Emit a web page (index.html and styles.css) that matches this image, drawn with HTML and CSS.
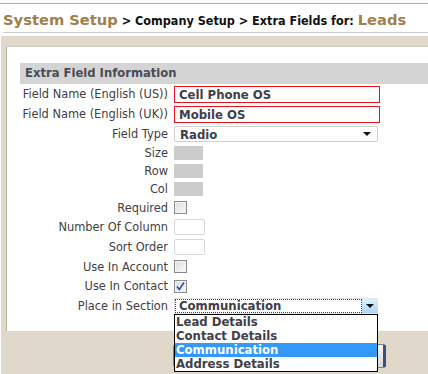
FILE: index.html
```html
<!DOCTYPE html>
<html lang="en">
<head>
  <meta charset="UTF-8">
  <title>Extra Fields for: Leads</title>
  <link rel="stylesheet" href="styles.css">
</head>
<body>
  <div class="top-rule"></div>
  <h1 class="crumbs">
    <span class="crumb-main">System Setup</span>
    <span class="crumb-sep">&gt; Company Setup &gt; Extra Fields for:</span>
    <span class="crumb-main">Leads</span>
  </h1>

  <div class="panel">
    <div class="sheet">
      <div class="section-head">Extra Field Information</div>

      <div class="form-grid">
        <label class="row-20">Field Name (English (US))</label>
        <div class="row-20"><div class="text-input invalid">Cell Phone OS</div></div>

        <label class="row-20">Field Name (English (UK))</label>
        <div class="row-20"><div class="text-input invalid">Mobile OS</div></div>

        <label class="row-20">Field Type</label>
        <div class="row-20">
          <div class="select-box">
            <span>Radio</span>
            <span class="caret"></span>
          </div>
        </div>

        <label class="row-18">Size</label>
        <div class="row-18"><div class="disabled-box"></div></div>

        <label class="row-18">Row</label>
        <div class="row-18"><div class="disabled-box"></div></div>

        <label class="row-18">Col</label>
        <div class="row-18"><div class="disabled-box"></div></div>

        <label class="row-19">Required</label>
        <div class="row-19"><span class="checkbox"></span></div>

        <label class="row-20">Number Of Column</label>
        <div class="row-20"><div class="small-input"></div></div>

        <label class="row-20">Sort Order</label>
        <div class="row-20"><div class="small-input"></div></div>

        <label class="row-19">Use In Account</label>
        <div class="row-19"><span class="checkbox"></span></div>

        <label class="row-20">Use In Contact</label>
        <div class="row-20">
          <span class="checkbox checked">
            <svg width="11" height="11" viewBox="0 0 11 11"><path d="M2 5.5 L4.3 8.5 L9 1.5" fill="none" stroke="#2a4fa8" stroke-width="1.6"/></svg>
          </span>
        </div>

        <label class="row-20">Place in Section</label>
        <div class="row-20">
          <div class="dropdown">
            <div class="select-open">
              <span class="focus-text">Communication</span>
              <span class="drop-btn"><span class="caret"></span></span>
            </div>
            <ul class="option-list">
              <li>Lead Details</li>
              <li>Contact Details</li>
              <li class="selected">Communication</li>
              <li>Address Details</li>
            </ul>
          </div>
        </div>
      </div>
    </div>

    <div class="actions">
      <button class="btn">Save</button>
      <button class="btn btn-focus">Cancel</button>
    </div>
  </div>
</body>
</html>
```

FILE: styles.css
```css
/* ===== Base ===== */
* {
  margin: 0;
  padding: 0;
  box-sizing: border-box;
}

body {
  background: #ffffff;
  font-family: "DejaVu Sans", Verdana, sans-serif;
  font-size: 11.4px;
  color: #3f4049;
}

.top-rule {
  margin-top: 3px;
  height: 1px;
  background: #aab2bf;
}

/* ===== Breadcrumb title ===== */
.crumbs {
  margin: 0 0 0 3px;
  height: 29px;
  padding-top: 7px;
  border-bottom: 1px solid #cccccc;
  font-family: "DejaVu Sans Condensed", "DejaVu Sans", sans-serif;
  font-weight: bold;
  font-size: 12.5px;
  color: #111111;
  white-space: nowrap;
}

.crumb-main {
  font-family: "DejaVu Sans", Verdana, sans-serif;
  font-size: 14.7px;
  color: #a0804f;
}

/* ===== Beige panel ===== */
.panel {
  margin: 3px 0 0 1px;
  padding: 10px 0 0 5px;
  background: #e0d8cb;
  height: 340px;
}

.sheet {
  background: #ffffff;
  border-left: 1px solid #b5aea3;
  border-top: 1px solid #cfc8bd;
  padding: 16px 0 15px 13px;
}

.section-head {
  background: #d4d4d4;
  height: 21px;
  padding: 3px 0 0 5px;
  font-weight: bold;
  font-size: 11.6px;
  color: #474c58;
}

/* ===== Form grid ===== */
.form-grid {
  display: grid;
  grid-template-columns: 148px 1fr;
  column-gap: 6px;
}

.form-grid > * {
  display: flex;
  align-items: center;
}

.form-grid label {
  justify-content: flex-end;
  white-space: nowrap;
}

.row-20 { height: 20px; }
.row-19 { height: 19px; }
.row-18 { height: 18px; }

.text-input,
.select-box,
.focus-text,
.option-list li {
  font-family: "DejaVu Sans Condensed", "DejaVu Sans", sans-serif;
  font-weight: bold;
  font-size: 13px;
  color: #3f4049;
}

.text-input {
  width: 206px;
  height: 17px;
  border: 1px solid #e8141c;
  padding-left: 4px;
  line-height: 15px;
}

.select-box {
  width: 204px;
  height: 16px;
  border: 1px solid #cfcfcf;
  border-radius: 2px;
  padding: 0 6px 0 5px;
  display: flex;
  align-items: center;
  justify-content: space-between;
}

.caret {
  width: 0;
  height: 0;
  border-left: 4px solid transparent;
  border-right: 4px solid transparent;
  border-top: 4px solid #111111;
}

.disabled-box {
  width: 29px;
  height: 14px;
  background: #cccccc;
}

.small-input {
  width: 31px;
  height: 16px;
  border: 1px solid #d6d9de;
  border-radius: 2px;
  background: #ffffff;
}

.checkbox {
  width: 13px;
  height: 13px;
  border: 1px solid #8a8a8a;
  background: linear-gradient(135deg, #dcdcdc, #fbfbfb);
  box-shadow: inset 0 0 0 1px #f4f4f4;
  display: flex;
  align-items: center;
  justify-content: center;
}

.checkbox.checked {
  background: linear-gradient(135deg, #d6dce6, #f4f6fa);
}

/* ===== Open dropdown ===== */
.dropdown {
  position: relative;
  width: 204px;
}

.select-open {
  height: 16px;
  display: flex;
  border: 1px solid #e4e4e4;
  border-right: none;
}

.focus-text {
  flex: 1;
  border: 1px dotted #444444;
  padding-left: 3px;
  line-height: 12px;
}

.drop-btn {
  width: 16px;
  background: linear-gradient(#e2f1fc, #a9d6f7);
  display: flex;
  align-items: center;
  justify-content: center;
}

.option-list {
  position: absolute;
  top: 16px;
  left: 0;
  width: 204px;
  list-style: none;
  background: #ffffff;
  border: 1px solid #000000;
  z-index: 10;
}

.option-list li {
  height: 14px;
  line-height: 14px;
  padding-left: 1px;
}

.option-list li.selected {
  background: #3399ff;
  color: #ffffff;
}

/* ===== Buttons ===== */
.actions {
  display: flex;
  gap: 15px;
  padding: 13px 0 0 167px;
}

.btn {
  width: 100px;
  height: 24px;
  border: 1px solid #7a7f88;
  border-radius: 3px;
  background: linear-gradient(#f6f6f6, #d8d8d8);
  font-family: "DejaVu Sans", Verdana, sans-serif;
  font-size: 11px;
  color: #222222;
}

.btn-focus {
  width: 98px;
  border-right: 3px solid #3c4f7a;
}
```
